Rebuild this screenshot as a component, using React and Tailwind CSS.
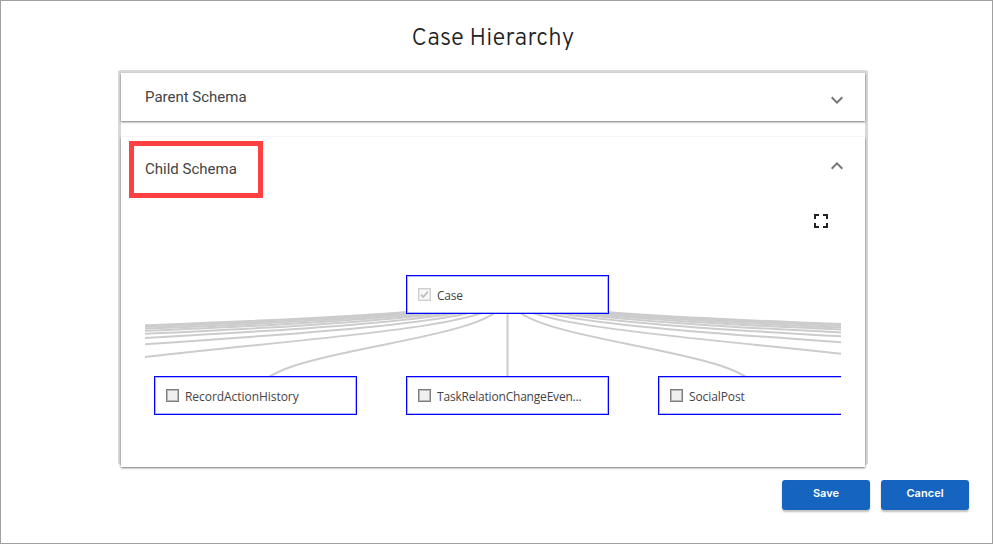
const steps = [9, 8, 7, 6, 5, 4, 3, 2, 1, 0, -1, -2, -3, -4, -5, -6, -7, -8, -9];

function Links() {
  return (
    <svg className="absolute inset-0" width="696" height="200" fill="none" stroke="#ccc" strokeWidth="2">
      {steps.map((k) => {
        const x = 362.5 + 252 * k;
        return <path key={k} d={`M362.5 50.2C362.5 100.2 ${x} 100.2 ${x} 150.2`} />;
      })}
    </svg>
  );
}

function Node({ label, place, checked, spacing }) {
  return (
    <div className={`absolute flex h-[39px] w-[203px] items-center border border-[#0000ff] bg-white pl-[11px] shadow-[inset_0_0_0_1px_#b4b4ff] ${place}`}>
      <span className={`relative block size-[13px] shrink-0 border ${checked ? "border-[#cfcfcf] bg-[#f8f8f8] shadow-[inset_0_0_0_1px_#e6e6e6]" : "border-[#7c7c7c] bg-[#efefef] shadow-[inset_0_0_0_1px_#b8b8b8]"}`}>
        {checked && (
          <svg className="absolute left-0 top-0" width="11" height="11" viewBox="0 0 11 11" fill="none" stroke="#bcbcbc" strokeWidth="1.8">
            <path d="M2 5.6 4.3 8 9 2.5" />
          </svg>
        )}
      </span>
      <span className={`ml-[6px] mt-[2px] whitespace-nowrap font-['Open_Sans',sans-serif] text-[12px] leading-4 text-[#444] ${spacing}`}>{label}</span>
    </div>
  );
}

function Chevron({ up, className }) {
  return (
    <svg className={className} width="12" height="8" viewBox="0 0 12 8" fill="none" stroke="#757575" strokeWidth="2">
      <path d={up ? "M.7 6.7 6 1.4l5.3 5.3" : "M.7 1.3 6 6.6l5.3-5.3"} />
    </svg>
  );
}

function Button({ children }) {
  return (
    <button className="flex h-[30px] w-[88px] items-center justify-center rounded-[3px] bg-[#1565c0] pb-[3px] font-['Inter',sans-serif] text-[11px] font-semibold tracking-[0.05px] text-white shadow-[0_2px_2px_rgba(0,0,0,0.25)]">
      {children}
    </button>
  );
}

export default function App() {
  return (
    <main className="h-[544px] w-[993px] overflow-hidden border border-[#a0a0a0] bg-white font-['Roboto',sans-serif]">
      <h1 className="mt-[21px] h-[48px] pr-[7px] text-center font-['Overpass','Noto_Sans',sans-serif] text-[24px] leading-[34px] font-light tracking-[0.15px] text-[#222]">
        Case Hierarchy
      </h1>
      <div className="ml-[117px] h-[395px] w-[750px] rounded-[3px] border-[3px] border-b-0 border-[#d8d8d8]">
        <section className="flex h-[48px] items-center justify-between bg-white pr-[22px] pl-6 shadow-[0_1px_2px_rgba(0,0,0,0.55)]">
          <h2 className="text-[15px] text-[#444]">Parent Schema</h2>
          <Chevron className="mt-[5px]" />
        </section>
        <section className="relative mt-4 h-[330px] bg-white shadow-[0_1px_2px_rgba(0,0,0,0.55)]">
          <header className="flex h-16 items-center justify-between pr-[22px] pl-6">
            <h2 className="text-[15px] text-[#444]">Child Schema</h2>
            <Chevron up className="-mt-[7px]" />
          </header>
          <div className="absolute top-1 left-2 h-[57px] w-[134px] border-[5px] border-[#ff4040]" />
          <div className="flex h-10 justify-end pt-[13px] pr-[37px]">
            <svg width="14" height="14" viewBox="0 0 14 14" fill="none" stroke="#222" strokeWidth="2">
              <path d="M5 1H1v4M9 1h4v4M1 9v4h4M13 9v4H9" />
            </svg>
          </div>
          <div className="relative mt-[4px] ml-6 h-[200px] w-[696px] overflow-hidden">
            <Links />
            <Node label="Case" checked place="left-[261px] top-[30px]" spacing="tracking-[-0.2px]" />
            <Node label="RecordActionHistory" place="left-[9px] top-[131px]" spacing="tracking-[-0.05px]" />
            <Node label="TaskRelationChangeEven..." place="left-[261px] top-[131px]" spacing="tracking-[-0.2px]" />
            <Node label="SocialPost" place="left-[513px] top-[131px]" spacing="tracking-[-0.1px]" />
          </div>
        </section>
      </div>
      <div className="mt-[15px] mr-[23px] flex justify-end gap-[11px]">
        <Button>Save</Button>
        <Button>Cancel</Button>
      </div>
    </main>
  );
}
